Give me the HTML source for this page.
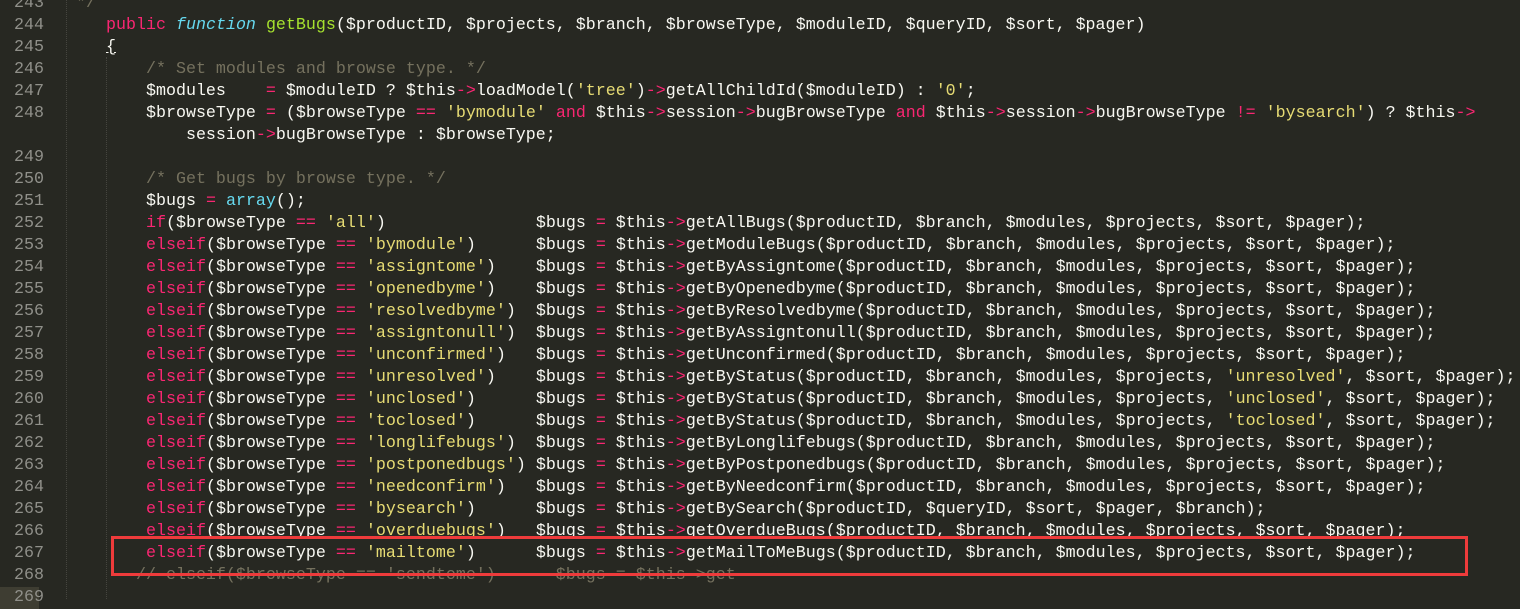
<!DOCTYPE html>
<html><head><meta charset="utf-8"><style>
body{margin:0;width:1520px;height:599px;background:#272822;overflow:hidden;position:relative;font-family:"Liberation Mono",monospace;}
pre{margin:0;position:absolute;left:66px;top:-7px;font-size:16.67px;line-height:22px;color:#f8f8f2;font-family:"Liberation Mono",monospace;}
.ln{position:absolute;left:0;top:-7px;width:44px;text-align:right;font-size:16.67px;line-height:22px;color:#90908a;white-space:pre;font-family:"Liberation Mono",monospace;}
.k{color:#f92672}.f{color:#66d9ef;font-style:italic}.g{color:#a6e22e}.s{color:#e6db74}.c{color:#75715e}
.guide{position:absolute;top:0;bottom:0;border-left:1px dotted #45453f}
.hl{position:absolute;left:0;top:587px;width:39px;height:22px;background:#3e3d32}
.box{position:absolute;left:111px;top:536px;width:1351px;height:34px;border:3px solid #ee3b3b}
</style></head><body>
<div class="hl"></div>
<div class="guide" style="left:66px"></div>
<div class="guide" style="left:106px;top:57px"></div>
<div class="ln">243
244
245
246
247
248

249
250
251
252
253
254
255
256
257
258
259
260
261
262
263
264
265
266
267
268
269</div>
<pre> <span class="c">*/</span>
    <span class="k">public</span> <span class="f">function</span> <span class="g">getBugs</span>($productID, $projects, $branch, $browseType, $moduleID, $queryID, $sort, $pager)
    <u>{</u>
        <span class="c">/* Set modules and browse type. */</span>
        $modules    <span class="k">=</span> $moduleID ? $this<span class="k">-></span>loadModel(<span class="s">'tree'</span>)<span class="k">-></span>getAllChildId($moduleID) : <span class="s">'0'</span>;
        $browseType <span class="k">=</span> ($browseType <span class="k">==</span> <span class="s">'bymodule'</span> <span class="k">and</span> $this<span class="k">-></span>session<span class="k">-></span>bugBrowseType <span class="k">and</span> $this<span class="k">-></span>session<span class="k">-></span>bugBrowseType <span class="k">!=</span> <span class="s">'bysearch'</span>) ? $this<span class="k">-></span>
            session<span class="k">-></span>bugBrowseType : $browseType;

        <span class="c">/* Get bugs by browse type. */</span>
        $bugs <span class="k">=</span> <span class="f" style="font-style:normal">array</span>();
        <span class="k">if</span>($browseType <span class="k">==</span> <span class="s">'all'</span>)               $bugs <span class="k">=</span> $this<span class="k">-></span>getAllBugs($productID, $branch, $modules, $projects, $sort, $pager);
        <span class="k">elseif</span>($browseType <span class="k">==</span> <span class="s">'bymodule'</span>)      $bugs <span class="k">=</span> $this<span class="k">-></span>getModuleBugs($productID, $branch, $modules, $projects, $sort, $pager);
        <span class="k">elseif</span>($browseType <span class="k">==</span> <span class="s">'assigntome'</span>)    $bugs <span class="k">=</span> $this<span class="k">-></span>getByAssigntome($productID, $branch, $modules, $projects, $sort, $pager);
        <span class="k">elseif</span>($browseType <span class="k">==</span> <span class="s">'openedbyme'</span>)    $bugs <span class="k">=</span> $this<span class="k">-></span>getByOpenedbyme($productID, $branch, $modules, $projects, $sort, $pager);
        <span class="k">elseif</span>($browseType <span class="k">==</span> <span class="s">'resolvedbyme'</span>)  $bugs <span class="k">=</span> $this<span class="k">-></span>getByResolvedbyme($productID, $branch, $modules, $projects, $sort, $pager);
        <span class="k">elseif</span>($browseType <span class="k">==</span> <span class="s">'assigntonull'</span>)  $bugs <span class="k">=</span> $this<span class="k">-></span>getByAssigntonull($productID, $branch, $modules, $projects, $sort, $pager);
        <span class="k">elseif</span>($browseType <span class="k">==</span> <span class="s">'unconfirmed'</span>)   $bugs <span class="k">=</span> $this<span class="k">-></span>getUnconfirmed($productID, $branch, $modules, $projects, $sort, $pager);
        <span class="k">elseif</span>($browseType <span class="k">==</span> <span class="s">'unresolved'</span>)    $bugs <span class="k">=</span> $this<span class="k">-></span>getByStatus($productID, $branch, $modules, $projects, <span class="s">'unresolved'</span>, $sort, $pager);
        <span class="k">elseif</span>($browseType <span class="k">==</span> <span class="s">'unclosed'</span>)      $bugs <span class="k">=</span> $this<span class="k">-></span>getByStatus($productID, $branch, $modules, $projects, <span class="s">'unclosed'</span>, $sort, $pager);
        <span class="k">elseif</span>($browseType <span class="k">==</span> <span class="s">'toclosed'</span>)      $bugs <span class="k">=</span> $this<span class="k">-></span>getByStatus($productID, $branch, $modules, $projects, <span class="s">'toclosed'</span>, $sort, $pager);
        <span class="k">elseif</span>($browseType <span class="k">==</span> <span class="s">'longlifebugs'</span>)  $bugs <span class="k">=</span> $this<span class="k">-></span>getByLonglifebugs($productID, $branch, $modules, $projects, $sort, $pager);
        <span class="k">elseif</span>($browseType <span class="k">==</span> <span class="s">'postponedbugs'</span>) $bugs <span class="k">=</span> $this<span class="k">-></span>getByPostponedbugs($productID, $branch, $modules, $projects, $sort, $pager);
        <span class="k">elseif</span>($browseType <span class="k">==</span> <span class="s">'needconfirm'</span>)   $bugs <span class="k">=</span> $this<span class="k">-></span>getByNeedconfirm($productID, $branch, $modules, $projects, $sort, $pager);
        <span class="k">elseif</span>($browseType <span class="k">==</span> <span class="s">'bysearch'</span>)      $bugs <span class="k">=</span> $this<span class="k">-></span>getBySearch($productID, $queryID, $sort, $pager, $branch);
        <span class="k">elseif</span>($browseType <span class="k">==</span> <span class="s">'overduebugs'</span>)   $bugs <span class="k">=</span> $this<span class="k">-></span>getOverdueBugs($productID, $branch, $modules, $projects, $sort, $pager);
        <span class="k">elseif</span>($browseType <span class="k">==</span> <span class="s">'mailtome'</span>)      $bugs <span class="k">=</span> $this<span class="k">-></span>getMailToMeBugs($productID, $branch, $modules, $projects, $sort, $pager);
       <span class="c">// elseif($browseType == 'sendtome')      $bugs = $this->get</span>
</pre>
<div class="box"></div>
</body></html>
